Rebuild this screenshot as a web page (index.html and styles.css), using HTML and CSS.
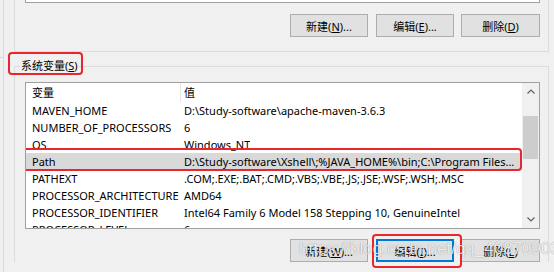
FILE: index.html
```html
<!DOCTYPE html>
<html lang="zh-CN">
<head>
    <meta charset="UTF-8">
    <meta name="viewport" content="width=device-width, initial-scale=1.0">
    <title>环境变量</title>
    <link rel="stylesheet" href="styles.css">
</head>
<body>
    <div class="window">
        <div class="edge"><div class="edge-tick"></div></div>
        <div class="panels">
            <div class="group user-group">
                <div class="list-stub"></div>
                <div class="button-row">
                    <button class="btn btn-new">新建(<u>N</u>)...</button>
                    <button class="btn btn-edit">编辑(<u>E</u>)...</button>
                    <button class="btn btn-del">删除(<u>D</u>)</button>
                </div>
            </div>
            <fieldset class="group system-group">
                <legend class="group-title mark mark-title">系统变量(<u>S</u>)</legend>
                <div class="list">
                    <div class="list-body">
                        <div class="list-head">
                            <span class="col-name">变量</span>
                            <span class="col-value">值</span>
                        </div>
                        <div class="row"><span class="col-name">MAVEN_HOME</span><span class="col-value">D:\Study-software\apache-maven-3.6.3</span></div>
                        <div class="row"><span class="col-name">NUMBER_OF_PROCESSORS</span><span class="col-value">6</span></div>
                        <div class="row"><span class="col-name">OS</span><span class="col-value">Windows_NT</span></div>
                        <div class="row selected mark mark-row"><span class="col-name">Path</span><span class="col-value">D:\Study-software\Xshell\;%JAVA_HOME%\bin;C:\Program Files...</span></div>
                        <div class="row"><span class="col-name">PATHEXT</span><span class="col-value">.COM;.EXE;.BAT;.CMD;.VBS;.VBE;.JS;.JSE;.WSF;.WSH;.MSC</span></div>
                        <div class="row"><span class="col-name">PROCESSOR_ARCHITECTURE</span><span class="col-value">AMD64</span></div>
                        <div class="row"><span class="col-name">PROCESSOR_IDENTIFIER</span><span class="col-value">Intel64 Family 6 Model 158 Stepping 10, GenuineIntel</span></div>
                        <div class="row"><span class="col-name">PROCESSOR_LEVEL</span><span class="col-value">6</span></div>
                    </div>
                    <div class="scrollbar">
                        <div class="scroll-btn">
                            <svg width="8" height="5" viewBox="0 0 8 5"><path d="M0.5 4.5 L4 1 L7.5 4.5" fill="none" stroke="#606060" stroke-width="1.2"/></svg>
                        </div>
                        <div class="scroll-thumb"></div>
                        <div class="scroll-track"></div>
                        <div class="scroll-btn">
                            <svg width="8" height="5" viewBox="0 0 8 5"><path d="M0.5 0.5 L4 4 L7.5 0.5" fill="none" stroke="#606060" stroke-width="1.2"/></svg>
                        </div>
                    </div>
                </div>
                <div class="button-row">
                    <button class="btn btn-new">新建(<u>W</u>)...</button>
                    <button class="btn btn-edit focused mark mark-btn">编辑(<u>I</u>)...</button>
                    <button class="btn btn-del">删除(<u>L</u>)</button>
                </div>
            </fieldset>
        </div>
        <div class="watermark">https://blog.csdn.net/qq_40870903</div>
    </div>
</body>
</html>
```

FILE: styles.css
```css
* {
    box-sizing: border-box;
}
body {
    margin: 0;
    background-color: #f0f0f0;
    font-family: "Noto Sans", "Noto Sans CJK SC", sans-serif;
    font-size: 11px;
    color: #000000;
}
.window {
    position: relative;
    display: flex;
    width: 554px;
    height: 272px;
    overflow: hidden;
}
.edge {
    width: 4px;
    border-right: 1px solid #d9d9d9;
    padding-top: 57px;
}
.edge-tick {
    height: 1px;
    background-color: #d9d9d9;
}
.panels {
    width: 535px;
    margin-left: 10px;
    display: flex;
    flex-direction: column;
}
.group {
    border: 1px solid #dcdcdc;
}
.user-group {
    height: 52px;
    border-top: none;
}
.list-stub {
    width: 515px;
    height: 3px;
    margin-left: 10px;
    background-color: #ffffff;
    border: 1px solid #a0a0a0;
    border-top: none;
}
.button-row {
    display: flex;
    justify-content: flex-end;
    padding-right: 8px;
}
.user-group .button-row {
    margin-top: 11px;
}
.btn {
    height: 23px;
    padding: 0;
    background-color: #e1e1e1;
    border: 1px solid #adadad;
    font-family: inherit;
    font-size: 11px;
    color: #000000;
}
.btn-new {
    width: 78px;
}
.btn-edit {
    width: 78px;
    margin-left: 8px;
}
.btn-del {
    width: 79px;
    margin-left: 7px;
}
.btn.focused {
    border-color: #0078d7;
    box-shadow: inset 0 0 0 1px #0078d7;
}
.system-group {
    margin: 6px 0 0 0;
    padding: 0 0 0 10px;
    min-width: 0;
    border-bottom: none;
}
.group-title {
    margin-left: -5px;
    padding: 0 1px;
    line-height: 16px;
}
.list {
    display: flex;
    width: 515px;
    height: 147px;
    margin-top: 8px;
    background-color: #ffffff;
    border: 1px solid #a0a0a0;
}
.list-body {
    flex: 1;
    overflow: hidden;
}
.list-head,
.row {
    display: flex;
    white-space: nowrap;
}
.list-head {
    height: 19px;
    line-height: 19px;
}
.row {
    height: 17px;
    line-height: 17px;
}
.col-name {
    width: 155px;
    flex-shrink: 0;
    padding-left: 6px;
}
.list-head .col-name {
    border-right: 1px solid #e5e5e5;
}
.col-value {
    padding-left: 3px;
    overflow: hidden;
}
.row.selected {
    background-color: #d9d9d9;
}
.scrollbar {
    width: 17px;
    display: flex;
    flex-direction: column;
    background-color: #f0f0f0;
}
.scroll-btn {
    height: 17px;
    display: flex;
    align-items: center;
    justify-content: center;
}
.scroll-thumb {
    height: 43px;
    margin: 16px 1px 0 1px;
    background-color: #cdcdcd;
}
.scroll-track {
    flex: 1;
}
.system-group .button-row {
    margin-top: 10px;
}
.mark {
    position: relative;
}
.mark::after {
    content: "";
    position: absolute;
    border: 2px solid #e8262b;
    border-radius: 4px;
}
.mark-title::after {
    top: -6px;
    bottom: -1px;
    left: -12px;
    right: -4px;
}
.mark-row::after {
    top: -5px;
    bottom: -1px;
    left: -4px;
    right: 0;
}
.mark-btn::after {
    top: -6px;
    bottom: -7px;
    left: -5px;
    right: -9px;
}
.watermark {
    position: absolute;
    left: 299px;
    top: 239px;
    font-family: "Liberation Sans", sans-serif;
    font-size: 17px;
    color: rgba(255, 255, 255, 0.85);
    text-shadow: 0 0 1px rgba(0, 0, 0, 0.45);
}
```
